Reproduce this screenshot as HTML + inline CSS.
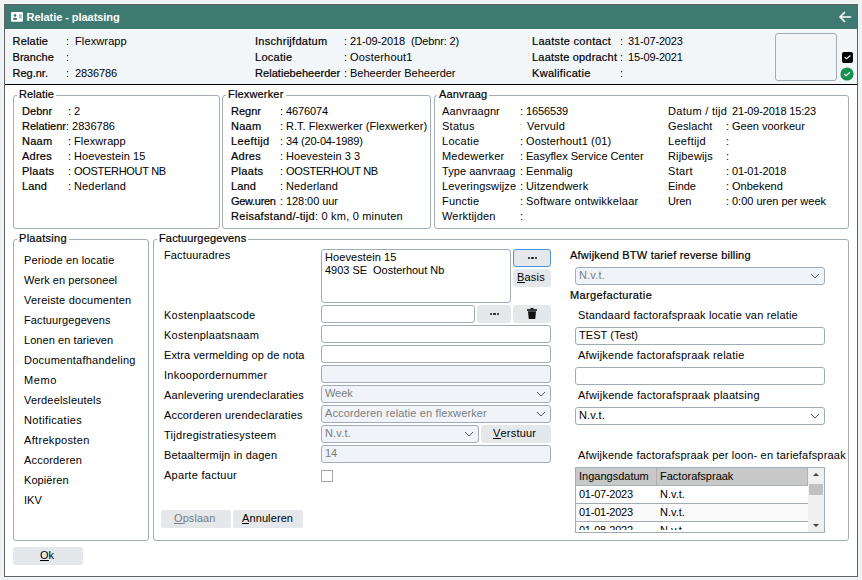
<!DOCTYPE html><html><head><meta charset="utf-8"><style>
*{box-sizing:border-box;margin:0;padding:0}
html,body{width:862px;height:580px;overflow:hidden;background:#eef2f5;font-family:"Liberation Sans",sans-serif;font-size:11px;color:#000}
.t{position:absolute;white-space:nowrap;line-height:14px}
.b{position:absolute}
.md{-webkit-text-stroke:0.2px #000}
.ls{letter-spacing:0.18px}
.fs{position:absolute;border:1px solid #a2adb7;border-radius:3px}
.lg{position:absolute;background:#fff;padding:0 2px 0 2px;line-height:14px;white-space:nowrap}
.inp{position:absolute;border:1px solid #9fabb6;border-radius:3px;background:#fff}
.dis{background:#f0f4f8}
.btn{position:absolute;background:#e4e8eb;border-radius:3px}
.gr{color:#7c7c7c}
u{text-decoration:none;border-bottom:1px solid currentColor;line-height:10px;display:inline-block}
</style></head><body>
<div class="b " style="left:3px;top:3px;width:856px;height:575px;background:#f5f8fa;"></div>
<div class="b " style="left:4px;top:4px;width:854px;height:573px;border:1px solid #606060;background:#fff;"></div>
<div class="b " style="left:5px;top:5px;width:852px;height:24px;background:#3e7a71;"></div>
<svg class="b" style="left:11px;top:12px" width="12" height="10" viewBox="0 0 12 10">
<rect x="0" y="0" width="12" height="9.7" rx="1.3" fill="#fff"/>
<circle cx="4" cy="3.4" r="1.3" fill="#3e7a71"/>
<rect x="3.4" y="4" width="1.2" height="2.2" fill="#9dbfb9"/>
<rect x="2" y="6.1" width="4" height="1.7" rx="0.4" fill="#3e7a71"/>
<rect x="8.1" y="2.3" width="2.7" height="4.2" fill="#9dbfb9"/>
</svg>
<div id="t1" class="t " style="left:26.5px;top:10px;color:#fff;font-weight:bold;letter-spacing:-0.05px;">Relatie - plaatsing</div>
<svg class="b" style="left:838px;top:10px" width="15" height="14" viewBox="0 0 15 14">
<path d="M2 7 H12.5 M6.5 2.5 L2 7 L6.5 11.5" stroke="#fff" stroke-width="1.7" fill="none" stroke-linecap="round" stroke-linejoin="round"/>
</svg>
<div class="b " style="left:5px;top:30px;width:852px;height:54px;background:#f2f6f9;"></div>
<div class="b " style="left:5px;top:84px;width:852px;height:1px;background:#000;"></div>
<div id="t2" class="t md" style="left:12.5px;top:34px;letter-spacing:0.2px">Relatie</div>
<div id="t3" class="t " style="left:66px;top:34px;">:</div>
<div id="t4" class="t " style="left:75px;top:34px;letter-spacing:0.123px;">Flexwrapp</div>
<div id="t5" class="t md" style="left:12.5px;top:50px;letter-spacing:0.05px">Branche</div>
<div id="t6" class="t " style="left:66px;top:50px;">:</div>
<div id="t7" class="t " style="left:75px;top:50px;"></div>
<div id="t8" class="t md" style="left:12.5px;top:66px;letter-spacing:0px">Reg.nr.</div>
<div id="t9" class="t " style="left:66px;top:66px;">:</div>
<div id="t10" class="t " style="left:75px;top:66px;letter-spacing:-0.13px;">2836786</div>
<div id="t11" class="t md" style="left:255px;top:34px;letter-spacing:0.28px">Inschrijfdatum</div>
<div id="t12" class="t " style="left:344px;top:34px;">:</div>
<div id="t13" class="t " style="left:350px;top:34px;letter-spacing:-0.125px;">21-09-2018 &nbsp;(Debnr: 2)</div>
<div id="t14" class="t md" style="left:255px;top:50px;letter-spacing:0.28px">Locatie</div>
<div id="t15" class="t " style="left:344px;top:50px;">:</div>
<div id="t16" class="t " style="left:350px;top:50px;letter-spacing:0.185px;">Oosterhout1</div>
<div id="t17" class="t md" style="left:255px;top:66px;letter-spacing:0.05px">Relatiebeheerder</div>
<div id="t18" class="t " style="left:344px;top:66px;">:</div>
<div id="t19" class="t " style="left:350px;top:66px;letter-spacing:-0.015px;">Beheerder Beheerder</div>
<div id="t20" class="t md" style="left:532px;top:34px;letter-spacing:0.3px">Laatste contact</div>
<div id="t21" class="t " style="left:620px;top:34px;">:</div>
<div id="t22" class="t " style="left:628px;top:34px;letter-spacing:-0.15px">31-07-2023</div>
<div id="t23" class="t md" style="left:532px;top:50px;letter-spacing:0.2px">Laatste opdracht</div>
<div id="t24" class="t " style="left:620px;top:50px;">:</div>
<div id="t25" class="t " style="left:628px;top:50px;letter-spacing:-0.15px">15-09-2021</div>
<div id="t26" class="t md" style="left:532px;top:66px;letter-spacing:0.3px">Kwalificatie</div>
<div id="t27" class="t " style="left:620px;top:66px;">:</div>
<div id="t28" class="t " style="left:628px;top:66px;letter-spacing:-0.15px"></div>
<div class="b " style="left:775px;top:33px;width:62px;height:48px;border:1px solid #a0adb7;border-radius:3px;background:#f2f6f9;"></div>
<svg class="b" style="left:841.5px;top:51.5px" width="11" height="11" viewBox="0 0 11 11">
<rect x="0" y="0" width="11" height="11" rx="2" fill="#000"/>
<path d="M2.6 5.2 L4.6 6.7 L8.4 3.5" stroke="#fff" stroke-width="1.1" fill="none"/>
</svg>
<svg class="b" style="left:840px;top:67px" width="14" height="14" viewBox="0 0 14 14">
<circle cx="7" cy="7" r="6.6" fill="#15904d"/>
<path d="M4 7 L6.1 8.7 L10 5.3" stroke="#fff" stroke-width="1.2" fill="none"/>
</svg>
<div class="fs" style="left:13px;top:95px;width:207px;height:134px"></div>
<div id="t29" class="lg md" style="left:17px;top:87px;letter-spacing:0.12px;">Relatie</div>
<div class="fs" style="left:222px;top:95px;width:209px;height:134px"></div>
<div id="t30" class="lg md" style="left:226px;top:87px;letter-spacing:0.17px;">Flexwerker</div>
<div class="fs" style="left:434px;top:95px;width:415px;height:134px"></div>
<div id="t31" class="lg md" style="left:437px;top:87px;letter-spacing:0.138px;">Aanvraag</div>
<div id="t32" class="t md" style="left:22px;top:104px;letter-spacing:0.055px;">Debnr</div>
<div id="t33" class="t " style="left:68px;top:104px;">:</div>
<div id="t34" class="t " style="left:74px;top:104px;">2</div>
<div id="t35" class="t md" style="left:22px;top:119px;"></div>
<div id="t36" class="t md" style="left:22px;top:134px;letter-spacing:0.276px;">Naam</div>
<div id="t37" class="t " style="left:68px;top:134px;">:</div>
<div id="t38" class="t " style="left:74px;top:134px;letter-spacing:0.123px;">Flexwrapp</div>
<div id="t39" class="t md" style="left:22px;top:149px;letter-spacing:0.246px;">Adres</div>
<div id="t40" class="t " style="left:68px;top:149px;">:</div>
<div id="t41" class="t " style="left:74px;top:149px;letter-spacing:0.088px;">Hoevestein 15</div>
<div id="t42" class="t md" style="left:22px;top:164px;letter-spacing:0.281px;">Plaats</div>
<div id="t43" class="t " style="left:68px;top:164px;">:</div>
<div id="t44" class="t " style="left:74px;top:164px;letter-spacing:-0.453px;"><span style="letter-spacing:-0.3px">OOSTERHOUT NB</span></div>
<div id="t45" class="t md" style="left:22px;top:179px;letter-spacing:0.156px;">Land</div>
<div id="t46" class="t " style="left:68px;top:179px;">:</div>
<div id="t47" class="t " style="left:74px;top:179px;letter-spacing:0.15px;">Nederland</div>
<div id="t48" class="t " style="left:22px;top:119px;letter-spacing:-0.003px;"><span class=md>Relatienr</span>: 2836786</div>
<div id="t49" class="t md" style="left:231px;top:104px;letter-spacing:0.004px;">Regnr</div>
<div id="t50" class="t " style="left:280px;top:104px;">:</div>
<div id="t51" class="t " style="left:286px;top:104px;letter-spacing:-0.13px;">4676074</div>
<div id="t52" class="t md" style="left:231px;top:119px;letter-spacing:0.276px;">Naam</div>
<div id="t53" class="t " style="left:280px;top:119px;">:</div>
<div id="t54" class="t " style="left:286px;top:119px;letter-spacing:0.02px;">R.T. Flexwerker (Flexwerker)</div>
<div id="t55" class="t md" style="left:231px;top:134px;letter-spacing:0.388px;">Leeftijd</div>
<div id="t56" class="t " style="left:280px;top:134px;">:</div>
<div id="t57" class="t " style="left:286px;top:134px;letter-spacing:-0.137px;">34 (20-04-1989)</div>
<div id="t58" class="t md" style="left:231px;top:149px;letter-spacing:0.246px;">Adres</div>
<div id="t59" class="t " style="left:280px;top:149px;">:</div>
<div id="t60" class="t " style="left:286px;top:149px;letter-spacing:0.062px;">Hoevestein 3 3</div>
<div id="t61" class="t md" style="left:231px;top:164px;letter-spacing:0.281px;">Plaats</div>
<div id="t62" class="t " style="left:280px;top:164px;">:</div>
<div id="t63" class="t " style="left:286px;top:164px;letter-spacing:-0.453px;"><span style="letter-spacing:-0.3px">OOSTERHOUT NB</span></div>
<div id="t64" class="t md" style="left:231px;top:179px;letter-spacing:0.156px;">Land</div>
<div id="t65" class="t " style="left:280px;top:179px;">:</div>
<div id="t66" class="t " style="left:286px;top:179px;letter-spacing:0.15px;">Nederland</div>
<div id="t67" class="t md" style="left:231px;top:194px;letter-spacing:0.029px;"><span style="letter-spacing:-0.3px">Gew.uren</span></div>
<div id="t68" class="t " style="left:280px;top:194px;">:</div>
<div id="t69" class="t " style="left:286px;top:194px;letter-spacing:-0.074px;">128:00 uur</div>
<div id="t70" class="t " style="left:231px;top:209px;letter-spacing:0.201px;"><span class=md style="letter-spacing:0.3px">Reisafstand/-tijd</span>: 0 km, 0 minuten</div>
<div id="t71" class="t " style="left:442px;top:104px;letter-spacing:0.101px;">Aanvraagnr</div>
<div id="t72" class="t " style="left:520px;top:104px;">:</div>
<div id="t73" class="t " style="left:526px;top:104px;letter-spacing:-0.13px;">1656539</div>
<div id="t74" class="t " style="left:442px;top:119px;"></div>
<div id="t75" class="t " style="left:442px;top:134px;letter-spacing:0.281px;">Locatie</div>
<div id="t76" class="t " style="left:520px;top:134px;">:</div>
<div id="t77" class="t " style="left:526px;top:134px;letter-spacing:0.126px;">Oosterhout1 (01)</div>
<div id="t78" class="t " style="left:442px;top:149px;letter-spacing:0.188px;">Medewerker</div>
<div id="t79" class="t " style="left:520px;top:149px;">:</div>
<div id="t80" class="t " style="left:526px;top:149px;letter-spacing:0.013px;">Easyflex Service Center</div>
<div id="t81" class="t " style="left:442px;top:164px;letter-spacing:0.049px;">Type aanvraag</div>
<div id="t82" class="t " style="left:520px;top:164px;">:</div>
<div id="t83" class="t " style="left:526px;top:164px;letter-spacing:0.112px;">Eenmalig</div>
<div id="t84" class="t " style="left:442px;top:179px;letter-spacing:0.153px;">Leveringswijze</div>
<div id="t85" class="t " style="left:520px;top:179px;">:</div>
<div id="t86" class="t " style="left:526px;top:179px;letter-spacing:0.166px;">Uitzendwerk</div>
<div id="t87" class="t " style="left:442px;top:194px;letter-spacing:0.169px;">Functie</div>
<div id="t88" class="t " style="left:520px;top:194px;">:</div>
<div id="t89" class="t " style="left:526px;top:194px;letter-spacing:0.23px;">Software ontwikkelaar</div>
<div id="t90" class="t " style="left:442px;top:209px;letter-spacing:0.179px;">Werktijden</div>
<div id="t91" class="t " style="left:520px;top:209px;">:</div>
<div id="t92" class="t " style="left:526px;top:209px;"></div>
<div id="t93" class="t " style="left:442px;top:119px;letter-spacing:0.25px;">Status</div>
<div id="t94" class="t " style="left:519.5px;top:119px;color:#f0b878">:</div>
<div id="t95" class="t " style="left:527px;top:119px;letter-spacing:0.19px;">Vervuld</div>
<div id="t96" class="t " style="left:668px;top:104px;letter-spacing:0.3px">Datum / tijd</div>
<div id="t97" class="t " style="left:732px;top:104px;letter-spacing:-0.18px">21-09-2018 15:23</div>
<div id="t98" class="t " style="left:668px;top:119px;letter-spacing:0.145px;">Geslacht</div>
<div id="t99" class="t " style="left:726px;top:119px;">:</div>
<div id="t100" class="t " style="left:732px;top:119px;letter-spacing:0.003px;">Geen voorkeur</div>
<div id="t101" class="t " style="left:668px;top:134px;letter-spacing:0.312px;">Leeftijd</div>
<div id="t102" class="t " style="left:726px;top:134px;">:</div>
<div id="t103" class="t " style="left:732px;top:134px;"></div>
<div id="t104" class="t " style="left:668px;top:149px;letter-spacing:0.162px;">Rijbewijs</div>
<div id="t105" class="t " style="left:726px;top:149px;">:</div>
<div id="t106" class="t " style="left:732px;top:149px;"></div>
<div id="t107" class="t " style="left:668px;top:164px;letter-spacing:0.305px;">Start</div>
<div id="t108" class="t " style="left:726px;top:164px;">:</div>
<div id="t109" class="t " style="left:732px;top:164px;letter-spacing:-0.218px;">01-01-2018</div>
<div id="t110" class="t " style="left:668px;top:179px;letter-spacing:-0.062px;">Einde</div>
<div id="t111" class="t " style="left:726px;top:179px;">:</div>
<div id="t112" class="t " style="left:732px;top:179px;letter-spacing:0.002px;">Onbekend</div>
<div id="t113" class="t " style="left:668px;top:194px;letter-spacing:-0.156px;">Uren</div>
<div id="t114" class="t " style="left:726px;top:194px;">:</div>
<div id="t115" class="t " style="left:732px;top:194px;letter-spacing:-0.009px;">0:00 uren per week</div>
<div class="fs" style="left:13px;top:239px;width:136px;height:302px"></div>
<div id="t116" class="lg md" style="left:17px;top:231px;letter-spacing:0.295px;">Plaatsing</div>
<div id="t117" class="t " style="left:24px;top:253px;letter-spacing:0.132px;">Periode en locatie</div>
<div id="t118" class="t " style="left:24px;top:273px;letter-spacing:0.056px;">Werk en personeel</div>
<div id="t119" class="t " style="left:24px;top:293px;letter-spacing:0.213px;">Vereiste documenten</div>
<div id="t120" class="t " style="left:24px;top:313px;letter-spacing:0.1px;">Factuurgegevens</div>
<div id="t121" class="t " style="left:24px;top:333px;letter-spacing:0.068px;">Lonen en tarieven</div>
<div id="t122" class="t " style="left:24px;top:353px;letter-spacing:0.243px;">Documentafhandeling</div>
<div id="t123" class="t " style="left:24px;top:373px;letter-spacing:0.594px;">Memo</div>
<div id="t124" class="t " style="left:24px;top:393px;letter-spacing:0.181px;">Verdeelsleutels</div>
<div id="t125" class="t " style="left:24px;top:413px;letter-spacing:0.361px;">Notificaties</div>
<div id="t126" class="t " style="left:24px;top:433px;letter-spacing:0.317px;">Aftrekposten</div>
<div id="t127" class="t " style="left:24px;top:453px;letter-spacing:0.184px;">Accorderen</div>
<div id="t128" class="t " style="left:24px;top:473px;letter-spacing:0.08px;">Kopi&euml;ren</div>
<div id="t129" class="t " style="left:24px;top:493px;">IKV</div>
<div class="fs" style="left:153px;top:239px;width:696px;height:302px"></div>
<div id="t130" class="lg md" style="left:157px;top:231px;letter-spacing:0.152px;">Factuurgegevens</div>
<div id="t131" class="t " style="left:164px;top:248px;letter-spacing:0.128px;">Factuuradres</div>
<div id="t132" class="t " style="left:164px;top:308px;letter-spacing:0.246px;">Kostenplaatscode</div>
<div id="t133" class="t " style="left:164px;top:328px;letter-spacing:0.25px;">Kostenplaatsnaam</div>
<div id="t134" class="t " style="left:164px;top:348px;letter-spacing:0.112px;">Extra vermelding op de nota</div>
<div id="t135" class="t " style="left:164px;top:368px;letter-spacing:0.256px;">Inkoopordernummer</div>
<div id="t136" class="t " style="left:164px;top:388px;letter-spacing:0.129px;">Aanlevering urendeclaraties</div>
<div id="t137" class="t " style="left:164px;top:408px;letter-spacing:0.156px;">Accorderen urendeclaraties</div>
<div id="t138" class="t " style="left:164px;top:428px;letter-spacing:0.265px;">Tijdregistratiesysteem</div>
<div id="t139" class="t " style="left:164px;top:448px;letter-spacing:0.17px;">Betaaltermijn in dagen</div>
<div id="t140" class="t " style="left:164px;top:468px;letter-spacing:0.279px;">Aparte factuur</div>
<div class="b inp" style="left:321px;top:249px;width:190px;height:54px;"></div>
<div id="t141" class="t " style="left:325px;top:250px;letter-spacing:0.088px;">Hoevestein 15</div>
<div id="t142" class="t " style="left:325px;top:263px;letter-spacing:-0.026px;">4903 SE &nbsp;Oosterhout Nb</div>
<div class="btn" style="left:513px;top:249px;width:38px;height:18px;border:1.5px solid #4a8fe0"></div>
<div class="b" style="left:527.8px;top:256.55px;width:2.5px;height:2.5px;border-radius:50%;background:#111"></div>
<div class="b" style="left:531.3px;top:256.55px;width:2.5px;height:2.5px;border-radius:50%;background:#111"></div>
<div class="b" style="left:534.8px;top:256.55px;width:2.5px;height:2.5px;border-radius:50%;background:#111"></div>
<div class="btn" style="left:513px;top:269px;width:38px;height:18px"></div>
<div id="t143" class="t " style="left:517px;top:270px;letter-spacing:0.203px;"><u>B</u>asis</div>
<div class="b inp" style="left:321px;top:305px;width:154px;height:18px;"></div>
<div class="btn" style="left:477px;top:305px;width:34px;height:18px"></div>
<div class="b" style="left:489.7px;top:312.55px;width:2.5px;height:2.5px;border-radius:50%;background:#111"></div>
<div class="b" style="left:493.2px;top:312.55px;width:2.5px;height:2.5px;border-radius:50%;background:#111"></div>
<div class="b" style="left:496.7px;top:312.55px;width:2.5px;height:2.5px;border-radius:50%;background:#111"></div>
<div class="btn" style="left:513px;top:305px;width:38px;height:18px"></div>
<svg class="b" style="left:527px;top:308px" width="10" height="11" viewBox="0 0 10 11">
<rect x="0" y="1.2" width="10" height="1.6" fill="#111"/>
<rect x="3.5" y="0" width="3" height="1.5" fill="#111"/>
<path d="M1 3.3 H9 L8.3 10.4 Q8.2 11 7.6 11 H2.4 Q1.8 11 1.7 10.4 Z" fill="#111"/>
</svg>
<div class="b inp" style="left:321px;top:325px;width:230px;height:18px;"></div>
<div class="b inp" style="left:321px;top:345px;width:230px;height:18px;"></div>
<div class="b inp dis" style="left:321px;top:365px;width:230px;height:18px;"></div>
<div class="b inp dis" style="left:321px;top:385px;width:230px;height:18px;"></div>
<div id="t144" class="t gr" style="left:325px;top:386px;letter-spacing:-0.078px;">Week</div>
<svg class="b" style="left:536px;top:391px" width="10" height="6" viewBox="0 0 10 6"><path d="M1 1 L5 5 L9 1" stroke="#555" stroke-width="1" fill="none"/></svg>
<div class="b inp dis" style="left:321px;top:405px;width:230px;height:18px;"></div>
<div id="t145" class="t gr" style="left:325px;top:406px;letter-spacing:0.13px;">Accorderen relatie en flexwerker</div>
<svg class="b" style="left:536px;top:411px" width="10" height="6" viewBox="0 0 10 6"><path d="M1 1 L5 5 L9 1" stroke="#555" stroke-width="1" fill="none"/></svg>
<div class="b inp dis" style="left:321px;top:425px;width:158px;height:18px;"></div>
<div id="t146" class="t gr" style="left:325px;top:426px;letter-spacing:0.166px;">N.v.t.</div>
<svg class="b" style="left:464px;top:431px" width="10" height="6" viewBox="0 0 10 6"><path d="M1 1 L5 5 L9 1" stroke="#555" stroke-width="1" fill="none"/></svg>
<div class="btn" style="left:481px;top:425px;width:70px;height:18px"></div>
<div id="t147" class="t " style="left:493px;top:426px;letter-spacing:0.203px;"><u>V</u>erstuur</div>
<div class="b inp dis" style="left:321px;top:445px;width:230px;height:18px;"></div>
<div id="t148" class="t gr" style="left:325px;top:446px;">14</div>
<div class="b b" style="left:321px;top:470px;width:12px;height:12px;border:1px solid #a8a8a8;background:#fff;"></div>
<div class="btn" style="left:161px;top:510px;width:70px;height:18px"></div>
<div id="t149" class="t gr" style="left:174px;top:511px;letter-spacing:0.07px;"><u>O</u>pslaan</div>
<div class="btn" style="left:233px;top:510px;width:70px;height:18px"></div>
<div id="t150" class="t " style="left:242px;top:511px;letter-spacing:0.102px;"><u>A</u>nnuleren</div>
<div id="t151" class="t md ls" style="left:570px;top:248px;letter-spacing:0.216px;">Afwijkend BTW tarief reverse billing</div>
<div class="b inp dis" style="left:575px;top:267px;width:250px;height:18px;"></div>
<div id="t152" class="t gr" style="left:579px;top:268px;letter-spacing:0.166px;">N.v.t.</div>
<svg class="b" style="left:810px;top:273px" width="10" height="6" viewBox="0 0 10 6"><path d="M1 1 L5 5 L9 1" stroke="#555" stroke-width="1" fill="none"/></svg>
<div id="t153" class="t md" style="left:570px;top:288px;letter-spacing:0.38px">Margefacturatie</div>
<div id="t154" class="t ls" style="left:578px;top:308px;letter-spacing:0.174px;">Standaard factorafspraak locatie van relatie</div>
<div class="b inp" style="left:575px;top:327px;width:250px;height:18px;"></div>
<div id="t155" class="t " style="left:579px;top:328px;letter-spacing:0.047px;">TEST (Test)</div>
<div id="t156" class="t ls" style="left:578px;top:348px;letter-spacing:0.228px;">Afwijkende factorafspraak relatie</div>
<div class="b inp" style="left:575px;top:367px;width:250px;height:18px;"></div>
<div id="t157" class="t ls" style="left:578px;top:388px;letter-spacing:0.25px;">Afwijkende factorafspraak plaatsing</div>
<div class="b inp" style="left:575px;top:407px;width:250px;height:18px;"></div>
<div id="t158" class="t " style="left:579px;top:408px;letter-spacing:0.166px;">N.v.t.</div>
<svg class="b" style="left:810px;top:413px" width="10" height="6" viewBox="0 0 10 6"><path d="M1 1 L5 5 L9 1" stroke="#555" stroke-width="1" fill="none"/></svg>
<div id="t159" class="t ls" style="left:578px;top:448px;letter-spacing:0.197px;">Afwijkende factorafspraak per loon- en tariefafspraak</div>
<div class="b " style="left:575px;top:467px;width:250px;height:66px;border:1px solid #a3acb5;background:#fff;overflow:hidden;">
<div class="b" style="left:0;top:36px;width:232px;height:17px;background:#fafafa"></div>
<div class="b" style="left:0;top:0;width:232px;height:18px;background:#c8c8c8;border-right:1px solid #a9b3bb;border-bottom:1px solid #a9b3bb"></div>
<div class="b" style="left:80px;top:0;width:1px;height:18px;background:#b0b0b0"></div>
<div class="b" style="left:0;top:35px;width:232px;height:1px;background:#a3acb5"></div>
<div class="b" style="left:0;top:53px;width:232px;height:1px;background:#a3acb5"></div>
<div class="b" style="left:232px;top:0;width:16px;height:64px;background:#f0f0f0"></div>
<div class="b" style="left:233px;top:16px;width:14px;height:11px;background:#c1c1c1"></div>
<svg class="b" style="left:237px;top:5px" width="6" height="3" viewBox="0 0 6 3"><path d="M0 3 L3 0 L6 3Z" fill="#404040"/></svg>
<svg class="b" style="left:237px;top:56px" width="6" height="3" viewBox="0 0 6 3"><path d="M0 0 L3 3 L6 0Z" fill="#404040"/></svg>
<div class="b" style="left:0;top:0;width:232px;height:62px;overflow:hidden">
<div class="t" style="left:3px;top:1px">Ingangsdatum</div>
<div class="t" style="left:84px;top:1px">Factorafspraak</div>
<div class="t" style="left:3px;top:19px;letter-spacing:-0.25px">01-07-2023</div>
<div class="t" style="left:84px;top:19px">N.v.t.</div>
<div class="t" style="left:3px;top:37px;letter-spacing:-0.25px">01-01-2023</div>
<div class="t" style="left:84px;top:37px">N.v.t.</div>
<div class="t" style="left:3px;top:55px;letter-spacing:-0.25px">01-08-2022</div>
<div class="t" style="left:84px;top:55px">N.v.t.</div>
</div>
</div>
<div class="btn" style="left:13px;top:547px;width:70px;height:18px"></div>
<div id="t160" class="t " style="left:40px;top:548px;"><u>O</u>k</div>
</body></html>
